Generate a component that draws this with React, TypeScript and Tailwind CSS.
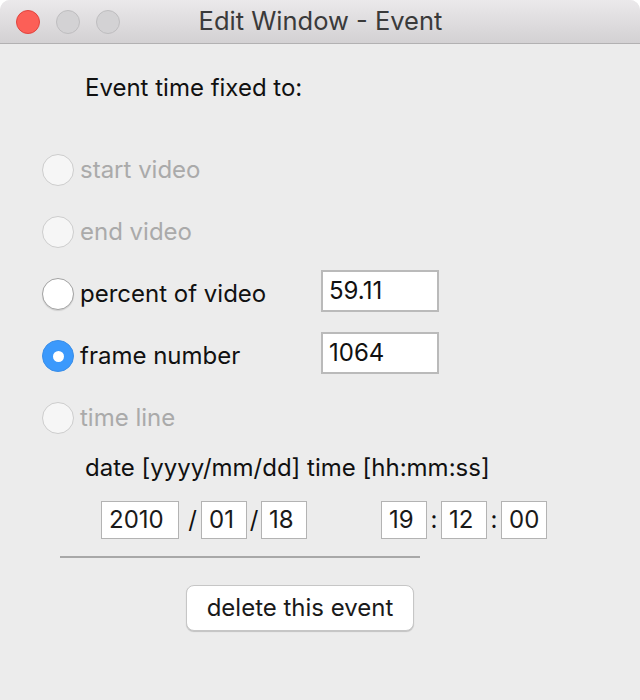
import React from "react";

type RadioState = "disabled" | "off" | "on";

const rows: { label: string; state: RadioState; value?: string }[] = [
  { label: "start video", state: "disabled" },
  { label: "end video", state: "disabled" },
  { label: "percent of video", state: "off", value: "59.11" },
  { label: "frame number", state: "on", value: "1064" },
  { label: "time line", state: "disabled" },
];

function Radio({ state }: { state: RadioState }) {
  if (state === "on") {
    return (
      <span className="w-[32px] h-[32px] shrink-0 rounded-full bg-[#3b99fc] border border-[#3a8ee8] flex items-center justify-center">
        <span className="w-[11px] h-[11px] rounded-full bg-white" />
      </span>
    );
  }
  if (state === "off") {
    return (
      <span className="w-[32px] h-[32px] shrink-0 rounded-full bg-white border border-[#a3a3a3] shadow-[0_1px_1px_rgba(0,0,0,0.12)]" />
    );
  }
  return (
    <span className="w-[32px] h-[32px] shrink-0 rounded-full bg-[#f6f6f6] border border-[#cdcdcd]" />
  );
}

function Field({ value, className }: { value: string; className: string }) {
  return (
    <div
      className={`h-[38px] bg-white border border-[#b3b3b3] pl-[7px] flex items-center text-[#1a1a1a] ${className}`}
    >
      {value}
    </div>
  );
}

export default function App() {
  return (
    <div className="w-[640px] h-[700px] bg-white font-['Inter','Liberation_Sans',sans-serif] text-[24px] text-[#111]">
      <div className="h-full bg-[#ececec] rounded-t-[10px] overflow-hidden flex flex-col">
        {/* title bar */}
        <div className="h-[44px] shrink-0 relative flex items-center justify-center bg-gradient-to-b from-[#ebe9eb] to-[#d3d1d3] border-b border-[#b2b1b2]">
          <div className="absolute left-[16px] top-[10px] flex gap-[16px]">
            <span className="w-[24px] h-[24px] rounded-full bg-[#fc5f57] border border-[#e0443e]" />
            <span className="w-[24px] h-[24px] rounded-full bg-[#d3d2d4] border border-[#bebdbf]" />
            <span className="w-[24px] h-[24px] rounded-full bg-[#d3d2d4] border border-[#bebdbf]" />
          </div>
          <span className="text-[25.5px] text-[#3a3a3a] pl-[1px]">Edit Window - Event</span>
        </div>

        <div className="ml-[85px] mt-[29px] h-[30px] leading-[30px]">Event time fixed to:</div>

        <div className="mt-[36px] flex flex-col">
          {rows.map((r) => (
            <div key={r.label} className="h-[62px] flex items-center pl-[42px]">
              <Radio state={r.state} />
              <span
                className={`ml-[6px] w-[241px] ${r.state === "disabled" ? "text-[#aaaaaa]" : "text-[#111]"}`}
              >
                {r.label}
              </span>
              {r.value && (
                <div className="w-[118px] h-[42px] mb-[6px] bg-white border-2 border-[#bababa] pl-[6px] flex items-center">
                  {r.value}
                </div>
              )}
            </div>
          ))}
        </div>

        <div className="ml-[85px] mt-[4px] h-[30px] leading-[30px]">date [yyyy/mm/dd] time [hh:mm:ss]</div>

        <div className="mt-[18px] flex items-center pl-[101px]">
          <Field value="2010" className="w-[78px]" />
          <span className="w-[22px] text-right pr-[4px]">/</span>
          <Field value="01" className="w-[46px]" />
          <span className="w-[14px] text-center">/</span>
          <Field value="18" className="w-[46px]" />
          <span className="w-[74px]" />
          <Field value="19" className="w-[46px]" />
          <span className="w-[14px] text-center">:</span>
          <Field value="12" className="w-[46px]" />
          <span className="w-[14px] text-center">:</span>
          <Field value="00" className="w-[46px]" />
        </div>

        <div className="ml-[60px] mt-[17px] w-[360px] h-[2px] bg-[#a8a8a8]" />

        <button className="ml-[186px] mt-[27px] w-[228px] h-[46px] bg-white rounded-[8px] border border-[#c6c6c6] shadow-[0_1px_1px_rgba(0,0,0,0.18)] text-[#1a1a1a]">
          delete this event
        </button>
      </div>
    </div>
  );
}
